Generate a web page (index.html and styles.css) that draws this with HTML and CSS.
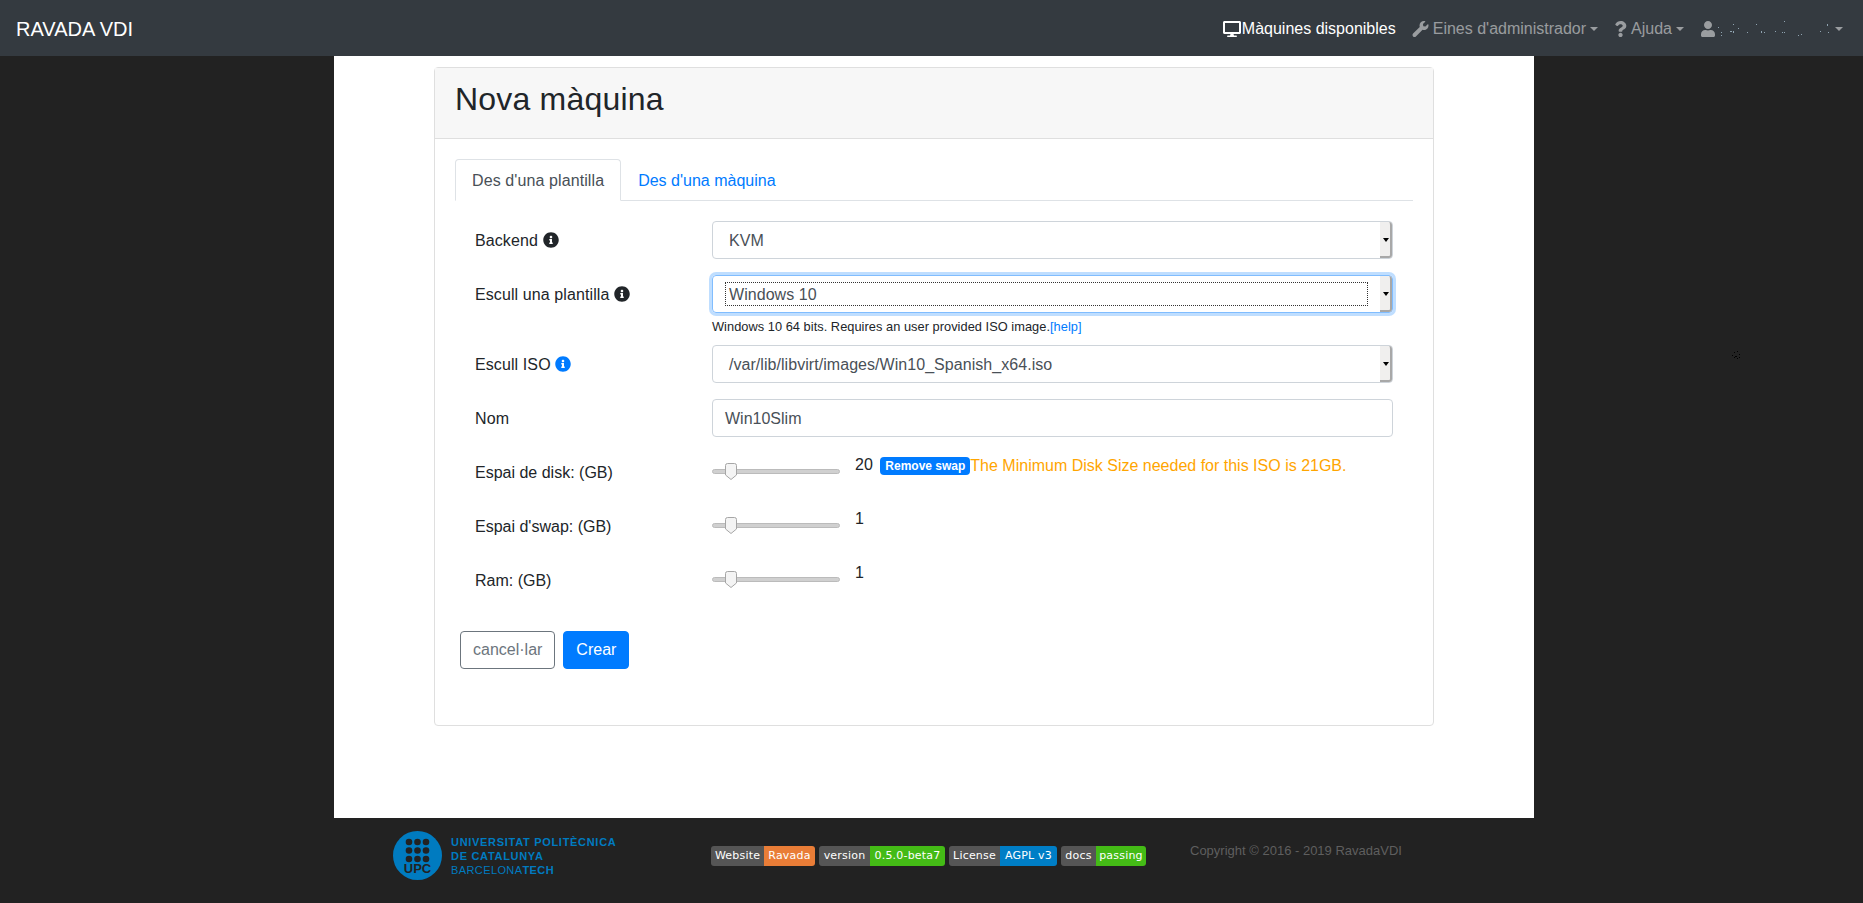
FILE: index.html
```html
<!DOCTYPE html>
<html lang="ca">

<head>
    <meta charset="UTF-8">
    <meta name="viewport" content="width=device-width, initial-scale=1.0">
    <title>Nova màquina</title>
    <link rel="stylesheet" href="styles.css">
</head>

<body>
    <nav class="navbar">
        <a class="brand">RAVADA VDI</a>
        <ul class="nav-links">
            <li class="nav-item active">
                <svg class="nav-icon icon-desktop" viewBox="0 0 576 512"><path fill="currentColor" d="M528 0H48C21.500 0 0 21.500 0 48v320c0 26.500 21.500 48 48 48h192l-16 48h-72c-13.300 0-24 10.700-24 24s10.700 24 24 24h272c13.300 0 24-10.700 24-24s-10.700-24-24-24h-72l-16-48h192c26.500 0 48-21.500 48-48V48c0-26.500-21.500-48-48-48zm-16 352H64V64h448v288z"/></svg>Màquines disponibles
            </li>
            <li class="nav-item">
                <svg class="nav-icon icon-wrench" viewBox="0 0 512 512"><path fill="currentColor" d="M507.700 109.100c-2.200-9-13.500-12.100-20.100-5.500l-74.400 74.400-67.900-11.300-11.300-67.900 74.400-74.400c6.600-6.600 3.400-17.900-5.700-20.200-47.400-11.700-99.600.9-136.600 37.900-39.600 39.600-50.500 97.100-34 147.200L18.700 402.800c-25 25-25 65.500 0 90.500 25 25 65.500 25 90.500 0l213.200-213.200c50.100 16.700 107.500 5.700 147.400-34.200 37.100-37.100 49.700-89.300 37.900-136.800z"/></svg>Eines d'administrador<span class="caret"></span>
            </li>
            <li class="nav-item">
                <svg class="nav-icon icon-question" viewBox="0 0 384 512"><path fill="currentColor" d="M202 0C122 0 70 33 29 92c-7 11-5 25 5 33l43 33c10 8 25 6 33-4 25-32 44-50 84-50 31 0 70 20 70 50 0 23-19 34-49 51-36 20-83 45-83 107v10c0 13 11 24 24 24h72c13 0 24-11 24-24v-6c0-43 126-45 126-162C378 66 287 0 202 0zm-10 376c-38 0-69 31-69 68s31 68 69 68 69-31 69-68-31-68-69-68z"/></svg>Ajuda<span class="caret"></span>
            </li>
            <li class="nav-item">
                <svg class="nav-icon icon-user" viewBox="0 0 448 512"><path fill="currentColor" d="M224 256c70.700 0 128-57.300 128-128S294.700 0 224 0 96 57.300 96 128s57.300 128 128 128zm89.600 32h-16.700c-22.200 10.200-46.900 16-72.900 16s-50.600-5.800-72.900-16h-16.700C60.200 288 0 348.200 0 422.400V464c0 26.500 21.500 48 48 48h352c26.500 0 48-21.500 48-48v-41.600c0-74.200-60.200-134.400-134.400-134.400z"/></svg>
                <!-- user name is scrambled in the screenshot, only specks are left -->
                <svg class="user-specks" width="114" height="20" viewBox="0 0 114 20">
                    <g fill="#8fa3b0">
                        <rect x="1" y="8" width="1" height="1"/><rect x="4" y="13" width="1" height="1"/><rect x="4" y="16" width="1" height="1"/>
                        <rect x="13" y="12" width="2" height="1"/><rect x="16" y="5" width="1" height="1"/><rect x="16" y="12" width="1" height="2"/>
                        <rect x="21" y="9" width="1" height="1"/><rect x="30" y="13" width="1" height="1"/><rect x="39" y="5" width="1" height="1"/>
                        <rect x="44" y="12" width="1" height="2"/><rect x="47" y="13" width="1" height="1"/><rect x="58" y="12" width="1" height="1"/>
                        <rect x="65" y="13" width="1" height="1"/><rect x="67" y="2" width="1" height="1"/><rect x="67" y="13" width="1" height="1"/>
                        <rect x="81" y="16" width="1" height="1"/><rect x="84" y="15" width="1" height="1"/><rect x="103" y="12" width="1" height="1"/>
                        <rect x="110" y="5" width="1" height="2"/><rect x="111" y="13" width="1" height="1"/>
                    </g>
                </svg><span class="caret"></span>
            </li>
        </ul>
    </nav>

    <main class="page">
        <section class="card">
            <header class="card-header">
                <h1>Nova màquina</h1>
            </header>
            <div class="card-body">
                <ul class="tabs">
                    <li class="tab tab-active">Des d'una plantilla</li>
                    <li class="tab">Des d'una màquina</li>
                </ul>

                <form class="machine-form">
                    <div class="row">
                        <label>Backend <svg class="info" viewBox="0 0 512 512"><use href="#info-circle"/></svg></label>
                        <div class="select"><span class="select-text">KVM</span><span class="select-btn"></span></div>
                    </div>

                    <div class="row row-help">
                        <label>Escull una plantilla <svg class="info" viewBox="0 0 512 512"><use href="#info-circle"/></svg></label>
                        <div>
                            <div class="select select-focus"><span class="select-text">Windows 10</span><span class="select-btn"></span></div>
                            <p class="help">Windows 10 64 bits. Requires an user provided ISO image.<a>[help]</a></p>
                        </div>
                    </div>

                    <div class="row">
                        <label>Escull ISO <svg class="info info-blue" viewBox="0 0 512 512"><use href="#info-circle"/></svg></label>
                        <div class="select"><span class="select-text">/var/lib/libvirt/images/Win10_Spanish_x64.iso</span><span class="select-btn"></span></div>
                    </div>

                    <div class="row">
                        <label>Nom</label>
                        <div class="text-input">Win10Slim</div>
                    </div>

                    <div class="slider-row">
                        <label>Espai de disk: (GB)</label>
                        <div class="slider"><svg class="thumb" viewBox="0 0 12 17"><use href="#slider-thumb"/></svg></div>
                        <span class="slider-value">20</span>
                        <span class="badge">Remove swap</span>
                        <span class="warning">The Minimum Disk Size needed for this ISO is 21GB.</span>
                    </div>

                    <div class="slider-row">
                        <label>Espai d'swap: (GB)</label>
                        <div class="slider"><svg class="thumb" viewBox="0 0 12 17"><use href="#slider-thumb"/></svg></div>
                        <span class="slider-value">1</span>
                    </div>

                    <div class="slider-row">
                        <label>Ram: (GB)</label>
                        <div class="slider"><svg class="thumb" viewBox="0 0 12 17"><use href="#slider-thumb"/></svg></div>
                        <span class="slider-value">1</span>
                    </div>

                    <div class="buttons">
                        <a class="btn btn-cancel">cancel·lar</a>
                        <a class="btn btn-primary">Crear</a>
                    </div>
                </form>
            </div>
        </section>
    </main>

    <footer class="footer">
        <div class="upc-logo">
            <svg class="upc-mark" width="49" height="49" viewBox="0 0 49 49">
                <circle cx="24.500" cy="24.500" r="24.500" fill="#007bc0"/>
                <g fill="#222">
                    <circle cx="16" cy="11" r="3.300"/><circle cx="24.500" cy="11" r="3.300"/><circle cx="33" cy="11" r="3.300"/>
                    <circle cx="16" cy="19.500" r="3.300"/><circle cx="24.500" cy="19.500" r="3.300"/><circle cx="33" cy="19.500" r="3.300"/>
                    <circle cx="16" cy="28" r="3.300"/><circle cx="24.500" cy="28" r="3.300"/><circle cx="33" cy="28" r="3.300"/>
                </g>
                <text x="24.500" y="42" text-anchor="middle" class="upc-letters">UPC</text>
            </svg>
            <div class="upc-text">
                <strong>UNIVERSITAT POLITÈCNICA</strong>
                <strong>DE CATALUNYA</strong>
                <span>BARCELONA<b>TECH</b></span>
            </div>
        </div>

        <div class="shields">
            <span class="shield shield-website"><span class="shield-left">Website</span><span class="shield-right orange">Ravada</span></span>
            <span class="shield shield-version"><span class="shield-left">version</span><span class="shield-right green">0.5.0-beta7</span></span>
            <span class="shield shield-license"><span class="shield-left">License</span><span class="shield-right blue">AGPL v3</span></span>
            <span class="shield shield-docs"><span class="shield-left">docs</span><span class="shield-right green">passing</span></span>
        </div>

        <p class="copyright">Copyright © 2016 - 2019 RavadaVDI</p>
    </footer>

    <!-- speck on the dark background -->
    <svg class="speck" width="10" height="10" viewBox="0 0 10 10">
        <g fill="#000">
            <rect x="1" y="4" width="1" height="1"/><rect x="3" y="1" width="1" height="1"/><rect x="6" y="0" width="1" height="1"/>
            <rect x="4" y="5" width="2" height="1"/><rect x="8" y="3" width="1" height="1"/><rect x="6" y="7" width="1" height="1"/>
            <rect x="8" y="6" width="1" height="1"/><rect x="3" y="6" width="1" height="1"/>
        </g>
    </svg>

    <svg class="defs" width="0" height="0">
        <symbol id="info-circle" viewBox="0 0 512 512">
            <path fill="currentColor" d="M256 8C119 8 8 119 8 256s111 248 248 248 248-111 248-248S393 8 256 8zm0 110c23 0 42 19 42 42s-19 42-42 42-42-19-42-42 19-42 42-42zm56 254c0 7-5 12-12 12h-88c-7 0-12-5-12-12v-24c0-7 5-12 12-12h12v-64h-12c-7 0-12-5-12-12v-24c0-7 5-12 12-12h64c7 0 12 5 12 12v100h12c7 0 12 5 12 12v24z"/>
        </symbol>
        <symbol id="slider-thumb" viewBox="0 0 12 17">
            <path fill="#f4f4f4" stroke="#a6a6a6" d="M2.500.5h7a2 2 0 0 1 2 2v9.500L6 16.500.5 12V2.500a2 2 0 0 1 2-2z"/>
        </symbol>
    </svg>
</body>

</html>
```

FILE: styles.css
```css
* {
    box-sizing: border-box;
}

body {
    margin: 0;
    background-color: #222;
    color: #212529;
    font-family: "Liberation Sans", Arial, sans-serif;
    font-size: 16px;
    line-height: 24px;
}

/* navbar */
.navbar {
    height: 56px;
    background-color: #343a40;
    display: flex;
    align-items: center;
    justify-content: space-between;
    padding: 2px 12px 0 16px;
}

.brand {
    color: #fff;
    font-size: 20px;
}

.nav-links {
    display: flex;
    list-style: none;
    margin: 0;
    padding: 0;
}

.nav-item {
    color: rgba(255, 255, 255, .5);
    display: flex;
    align-items: center;
    padding: 0 8px;
    white-space: nowrap;
}

.nav-item.active {
    color: #fff;
}

.nav-icon {
    height: 16px;
    margin-right: 4px;
}

.icon-desktop {
    width: 18px;
    margin-right: 1px;
}

.icon-wrench {
    width: 17px;
}

.icon-question {
    width: 13px;
}

.icon-user {
    width: 16px;
    margin-right: 1px;
}

.caret {
    display: inline-block;
    margin-left: 4px;
    border-top: 4.800px solid;
    border-left: 4.800px solid transparent;
    border-right: 4.800px solid transparent;
}

/* page */
.page {
    width: 1200px;
    height: 762px;
    margin-left: 334px;
    background-color: #fff;
    padding-top: 11px;
}

.card {
    width: 1000px;
    height: 659px;
    margin: 0 auto;
    border: 1px solid #dfdfdf;
    border-radius: 4px;
}

.card-header {
    height: 71px;
    background-color: #f7f7f7;
    border-bottom: 1px solid #dfdfdf;
    padding: 12px 20px;
}

.card-header h1 {
    margin: 0;
    font-size: 32px;
    font-weight: 500;
    line-height: 38px;
    letter-spacing: .2px;
}

.card-body {
    padding: 20px;
}

.tabs {
    display: flex;
    list-style: none;
    margin: 0 0 20px;
    padding: 0;
    border-bottom: 1px solid #dee2e6;
    height: 42px;
}

.tab {
    height: 42px;
    padding: 9px 16px 7px;
    border: 1px solid transparent;
    color: #007bff;
}

.tab-active {
    color: #495057;
    background-color: #fff;
    border-color: #dee2e6 #dee2e6 #fff;
    border-radius: 4px 4px 0 0;
    letter-spacing: .1px;
}

.machine-form {
    padding-left: 20px;
}

.row {
    display: grid;
    grid-template-columns: 237px 681px;
    margin-bottom: 16px;
}

.row label {
    padding-top: 8px;
    letter-spacing: .1px;
}

.row-help {
    margin-bottom: 9px;
}

.info {
    width: 16px;
    height: 16px;
    vertical-align: -2px;
    color: #212529;
}

.info-blue {
    color: #007bff;
}

.select {
    height: 38px;
    border: 1px solid #ced4da;
    border-radius: 4px;
    display: flex;
    align-items: center;
    justify-content: space-between;
    color: #495057;
    letter-spacing: .05px;
}

.select-text {
    padding: 1px 0 0 16px;
}

.select-btn {
    width: 12px;
    align-self: stretch;
    background-color: #f0efee;
    border-right: 2px solid #a8a8a8;
    border-bottom: 2px solid #a8a8a8;
    border-radius: 0 3px 3px 0;
    position: relative;
}

.select-btn::after {
    content: "";
    position: absolute;
    left: 3px;
    top: 16px;
    border-top: 4px solid #000;
    border-left: 3px solid transparent;
    border-right: 3px solid transparent;
}

.select-focus {
    border-color: #80bdff;
    box-shadow: 0 0 0 3px rgba(0, 123, 255, .25);
    padding: 5px 7px 5px 12px;
    gap: 12px;
}

.select-focus .select-text {
    flex: 1;
    padding: 0 0 0 3px;
    height: 24px;
    line-height: 23px;
    border: 1px dotted #333;
}

.select-focus .select-btn {
    margin: -5px -7px -5px 0;
}

.help {
    margin: 4px 0 0;
    font-size: 12.800px;
    line-height: 19px;
    letter-spacing: .04px;
}

.help a {
    color: #007bff;
}

.text-input {
    height: 38px;
    border: 1px solid #ced4da;
    border-radius: 4px;
    padding: 7px 12px 5px;
    color: #495057;
}

.slider-row {
    display: flex;
    align-items: flex-start;
    height: 54px;
    width: 958px;
}

.slider-row label {
    width: 237px;
    padding-top: 8px;
}

.slider {
    width: 128px;
    height: 5px;
    margin-top: 16px;
    background-color: #d0d0d0;
    border: 1px solid #bbb;
    border-radius: 3px;
    position: relative;
}

.thumb {
    position: absolute;
    left: 12px;
    top: -7px;
    width: 12px;
    height: 17px;
}

.slider-value {
    margin-left: 15px;
}

.badge {
    margin: 4px 0 0 7px;
    height: 18px;
    padding: 0 5px 0 5.500px;
    background-color: #007bff;
    color: #fff;
    font-size: 12px;
    font-weight: 700;
    line-height: 18px;
    border-radius: 4px;
}

.warning {
    color: orange;
    padding-top: 1px;
}

.buttons {
    display: flex;
    gap: 8px;
    margin: 16px 0 0 -15px;
}

.btn {
    height: 38px;
    padding: 6px 12px;
    border: 1px solid;
    border-radius: 4px;
}

.btn-cancel {
    color: #6c757d;
    border-color: #6c757d;
}

.btn-primary {
    color: #fff;
    background-color: #007bff;
    border-color: #007bff;
}

/* footer */
.footer {
    width: 1200px;
    height: 85px;
    margin-left: 334px;
    display: flex;
    align-items: flex-start;
}

.upc-logo {
    display: flex;
    width: 315px;
    margin-left: 59px;
    padding-top: 13px;
    gap: 9px;
}

.upc-letters {
    fill: #222;
    font-size: 13px;
    font-weight: 700;
}

.upc-text {
    color: #007bc0;
    font-size: 11px;
    line-height: 14px;
    letter-spacing: .7px;
    padding-top: 4px;
    display: flex;
    flex-direction: column;
}

.upc-text span {
    font-weight: 400;
    letter-spacing: .4px;
}

.shields {
    display: flex;
    gap: 4px;
    padding-top: 28px;
    margin-left: 3px;
}

.shield {
    display: flex;
    height: 20px;
    border-radius: 3px;
    overflow: hidden;
    color: #fff;
    font-family: "DejaVu Sans", sans-serif;
    font-size: 11px;
    letter-spacing: .2px;
    line-height: 20px;
    text-align: center;
}

.shield-left {
    background-color: #555;
}

.shield-website .shield-left { width: 53px; }
.shield-website .shield-right { width: 51px; }
.shield-version .shield-left { width: 51px; }
.shield-version .shield-right { width: 75px; }
.shield-license .shield-left { width: 51px; }
.shield-license .shield-right { width: 57px; }
.shield-docs .shield-left { width: 35px; }
.shield-docs .shield-right { width: 50px; }

.orange {
    background-color: #e97d37;
}

.green {
    background-color: #44bb16;
}

.blue {
    background-color: #007ec6;
}

.copyright {
    margin: 0 0 0 44px;
    padding-top: 21px;
    color: #5f5f5f;
    font-size: 13px;
    line-height: 24px;
}

.speck {
    position: absolute;
    left: 1731px;
    top: 351px;
}

.defs {
    position: absolute;
}
```
